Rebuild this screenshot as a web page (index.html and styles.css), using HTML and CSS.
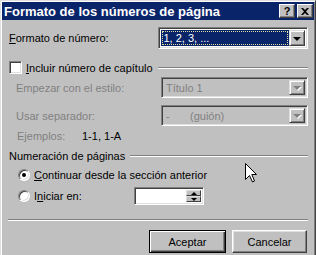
FILE: index.html
```html
<!DOCTYPE html>
<html>
<head>
    <meta charset="utf-8">
    <title>Formato de los números de página</title>
    <link rel="stylesheet" href="styles.css">
</head>
<body>

<div class="window">
    <div class="titlebar">
        <span class="title">Formato de los números de página</span>
        <div class="title-btns">
            <div class="tbtn help">?</div>
            <div class="tbtn close">
                <svg width="8" height="7" viewBox="0 0 8 7"><path d="M0 0h2l2 2 2-2h2L5 3.5 8 7H6L4 5 2 7H0l3-3.5z" fill="#000"/></svg>
            </div>
        </div>
    </div>

    <div class="content">
        <div class="row row-format">
            <label class="lbl lbl-format"><u>F</u>ormato de número:</label>
            <div class="combo combo-format">
                <div class="combo-value selected"><span class="focus">1, 2, 3, ...</span></div>
                <div class="combo-btn"><span class="arrow"></span></div>
            </div>
        </div>

        <div class="group group-chapter">
            <span class="check"></span>
            <span class="group-text"><u>I</u>ncluir número de capítulo</span>
            <span class="etch"></span>
        </div>

        <div class="row row-style">
            <label class="lbl lbl-sub disabled">Empezar con el estilo:</label>
            <div class="combo combo-sub disabled">
                <div class="combo-value">Título 1</div>
                <div class="combo-btn"><span class="arrow"></span></div>
            </div>
        </div>

        <div class="row row-sep">
            <label class="lbl lbl-sub disabled">Usar separador:</label>
            <div class="combo combo-sub disabled">
                <div class="combo-value"><span class="dash">-</span>(guión)</div>
                <div class="combo-btn"><span class="arrow"></span></div>
            </div>
        </div>

        <div class="row row-examples">
            <span class="ex-label disabled">Ejemplos:</span>
            <span class="ex-value">1-1, 1-A</span>
        </div>

        <div class="group group-pages">
            <span class="group-text">Numeración de páginas</span>
            <span class="etch"></span>
        </div>

        <div class="row row-radio">
            <span class="radio checked"></span>
            <span class="radio-text"><u>C</u>ontinuar desde la sección anterior</span>
        </div>

        <div class="row row-radio row-start">
            <span class="radio"></span>
            <span class="radio-text radio-start">I<u>n</u>iciar en:</span>
            <div class="spin">
                <div class="spin-field"></div>
                <div class="spin-btns">
                    <div class="spin-btn"><span class="arrow-up"></span></div>
                    <div class="spin-btn"><span class="arrow"></span></div>
                </div>
            </div>
        </div>

        <div class="separator"></div>

        <div class="buttons">
            <button type="button" class="btn btn-default">Aceptar</button>
            <button type="button" class="btn">Cancelar</button>
        </div>
    </div>

    <svg class="cursor" width="13" height="20" viewBox="0 0 13 20">
        <path d="M0.5 0.5 L0.5 16.5 L4.5 12.5 L7.5 19 L9.5 18 L6.8 11.5 L11.5 11.5 Z" fill="#fff" stroke="#000" stroke-width="1"/>
    </svg>
</div>

</body>
</html>
```

FILE: styles.css
```css
*{
    padding: 0;
    margin: 0;
    box-sizing: border-box;
}

body{
    font-family: "Liberation Sans", Arial, sans-serif;
    font-size: 11px;
    color: #000;
    background: #c0c0c0;
}

u{
    text-decoration: underline;
    text-underline-offset: 1px;
}

.window{
    position: relative;
    width: 316px;
    height: 258px;
    background: #c0c0c0;
    border: 1px solid;
    border-color: #dfdfdf #404040 #404040 #dfdfdf;
    box-shadow: inset 1px 1px #fff, inset -1px -1px #808080;
    overflow: hidden;
}

/*标题栏*/
.titlebar{
    margin: 1px 1px 0 1px;
    height: 18px;
    background: #0a246a;
    display: flex;
    align-items: center;
    justify-content: space-between;
    padding-left: 2px;
}

.title{
    color: #fff;
    font-weight: bold;
    font-size: 13px;
}

.title-btns{
    display: flex;
    gap: 2px;
    margin-right: 1px;
}

.tbtn{
    width: 16px;
    height: 14px;
    background: #c0c0c0;
    border: 1px solid;
    border-color: #fff #404040 #404040 #fff;
    box-shadow: inset -1px -1px #808080;
    display: flex;
    align-items: center;
    justify-content: center;
    font-weight: bold;
    font-size: 11px;
    line-height: 1;
}

.content{
    display: flex;
    flex-direction: column;
    padding: 0 7px;
}

.row{
    display: flex;
    align-items: center;
}

.disabled{
    color: #808080;
}

.row-format{
    margin-top: 7px;
    height: 22px;
}

.lbl-format{
    width: 151px;
    padding-left: 1px;
}

.lbl-sub{
    width: 153px;
    padding-left: 8px;
}

/*下拉框*/
.combo{
    display: flex;
    height: 100%;
    padding: 2px;
    border: 1px solid;
    border-color: #808080 #fff #fff #808080;
    box-shadow: inset 1px 1px #404040, inset -1px -1px #dfdfdf;
    background: #fff;
}

.combo-format{
    width: 150px;
}

.combo-sub{
    width: 147px;
    background: #c0c0c0;
}

.combo-value{
    flex: 1;
    display: flex;
    align-items: center;
    padding-left: 2px;
    white-space: nowrap;
}

.combo-value.selected{
    background: #0a246a;
    color: #fff;
    padding: 1px;
}

.focus{
    display: flex;
    align-items: center;
    width: 100%;
    height: 100%;
    outline: 1px dotted #e0e0a0;
    outline-offset: -1px;
    padding-left: 1px;
}

.dash{
    width: 24px;
}

.combo-btn{
    width: 16px;
    background: #c0c0c0;
    border: 1px solid;
    border-color: #dfdfdf #404040 #404040 #dfdfdf;
    box-shadow: inset 1px 1px #fff, inset -1px -1px #808080;
    display: flex;
    align-items: center;
    justify-content: center;
}

.arrow{
    width: 0;
    height: 0;
    border-left: 4px solid transparent;
    border-right: 4px solid transparent;
    border-top: 4px solid #000;
    margin-top: 1px;
}

.arrow-up{
    width: 0;
    height: 0;
    border-left: 3px solid transparent;
    border-right: 3px solid transparent;
    border-bottom: 3px solid #000;
}

.combo.disabled .arrow{
    border-top-color: #808080;
    filter: drop-shadow(1px 1px 0 #fff);
}

/*分组标题*/
.group{
    display: flex;
    align-items: center;
    height: 13px;
}

.group-chapter{
    margin-top: 12px;
    padding-left: 1px;
}

.group-pages{
    margin-top: 7px;
    padding-left: 1px;
}

.etch{
    flex: 1;
    height: 2px;
    margin-left: 5px;
    border-top: 1px solid #808080;
    border-bottom: 1px solid #fff;
}

.check{
    width: 13px;
    height: 13px;
    margin-right: 4px;
    background: #fff;
    border: 1px solid;
    border-color: #808080 #fff #fff #808080;
    box-shadow: inset 1px 1px #404040, inset -1px -1px #dfdfdf;
}

.row-style{
    margin-top: 3px;
    height: 21px;
}

.row-sep{
    margin-top: 7px;
    height: 21px;
}

.row-examples{
    margin-top: 3px;
    height: 13px;
    padding-left: 9px;
}

.ex-label{
    width: 65px;
}

/*单选框*/
.row-radio{
    height: 13px;
    padding-left: 10px;
    margin-top: 6px;
}

.row-start{
    height: 18px;
    margin-top: 6px;
}

.radio{
    position: relative;
    width: 12px;
    height: 12px;
    border-radius: 50%;
    background: #fff;
    border: 1px solid;
    border-color: #808080 #fff #fff #808080;
    box-shadow: inset 1px 1px #404040, inset -1px -1px #dfdfdf;
    margin-right: 4px;
}

.radio.checked::after{
    content: "";
    position: absolute;
    left: 3px;
    top: 3px;
    width: 4px;
    height: 4px;
    border-radius: 50%;
    background: #000;
}

.radio-start{
    width: 100px;
}

.spin{
    display: flex;
    width: 70px;
    height: 18px;
    padding: 2px;
    background: #fff;
    border: 1px solid;
    border-color: #808080 #fff #fff #808080;
    box-shadow: inset 1px 1px #404040, inset -1px -1px #dfdfdf;
}

.spin-field{
    flex: 1;
}

.spin-btns{
    width: 15px;
    display: flex;
    flex-direction: column;
}

.spin-btn{
    flex: 1;
    background: #c0c0c0;
    border: 1px solid;
    border-color: #dfdfdf #404040 #404040 #dfdfdf;
    display: flex;
    align-items: center;
    justify-content: center;
}

.spin-btn .arrow{
    border-left-width: 3px;
    border-right-width: 3px;
    border-top-width: 3px;
    margin-top: 0;
}

.separator{
    margin-top: 14px;
    height: 2px;
    border-top: 1px solid #808080;
    border-bottom: 1px solid #fff;
}

.buttons{
    display: flex;
    justify-content: flex-end;
    gap: 6px;
    margin-top: 9px;
    padding-right: 1px;
}

.btn{
    width: 75px;
    height: 23px;
    font-family: inherit;
    font-size: 11px;
    color: #000;
    background: #c0c0c0;
    border: 1px solid;
    border-color: #fff #404040 #404040 #fff;
    box-shadow: inset -1px -1px #808080, inset 1px 1px #dfdfdf;
}

.btn-default{
    width: 77px;
    border: 1px solid #000;
    box-shadow: inset 1px 1px #fff, inset -1px -1px #404040, inset -2px -2px #808080;
}

.cursor{
    position: absolute;
    left: 244px;
    top: 162px;
}
```
